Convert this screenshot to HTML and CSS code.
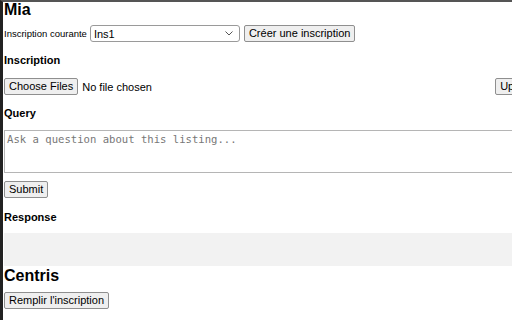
FILE: index.html
```html
<!doctype html>
<html>
  <head>
    <meta charset="utf-8">
    <title>Mia</title>
    <link rel="stylesheet" href="styles.css">
  </head>
  <body>
    <div class="popup">
      <h1>Mia</h1>

      <div class="current">
        <label for="current" class="small">Inscription courante</label>
        <span class="select-wrap">
          <select id="current" class="select">
            <option>Ins1</option>
          </select>
          <svg class="chevron" viewBox="0 0 8 5" width="8" height="5">
            <path d="M0.5 0.5 L4 4 L7.5 0.5"></path>
          </svg>
        </span>
        <button type="button" class="btn">Créer une inscription</button>
      </div>

      <h2>Inscription</h2>

      <div class="upload">
        <div class="file">
          <button type="button" class="btn">Choose Files</button>
          <span class="file-name">No file chosen</span>
        </div>
        <button type="button" class="btn">Upload</button>
      </div>

      <h2>Query</h2>
      <textarea class="query" placeholder="Ask a question about this listing..."></textarea>

      <div class="actions">
        <button type="button" class="btn">Submit</button>
      </div>

      <h2>Response</h2>
      <div class="response"></div>

      <h1 class="section">Centris</h1>
      <div class="actions">
        <button type="button" class="btn">Remplir l'inscription</button>
      </div>
    </div>
  </body>
</html>
```

FILE: styles.css
```css
html {
  box-sizing: border-box;
}

*, *:before, *:after {
  box-sizing: inherit;
}

body {
  margin: 0;
  font-family: "Liberation Sans", Arial, sans-serif;
  color: #000;
  background: #fff;
  border-top: 2px solid #555;
  border-left: 3px solid #222;
  min-height: 320px;
  overflow: hidden;
}

.popup {
  width: 560px;
  padding-left: 1px;
}

h1 {
  font-size: 16px;
  line-height: 16px;
  margin: 0;
  font-weight: bold;
}

h2 {
  font-size: 11px;
  line-height: 14px;
  margin: 0;
  font-weight: bold;
}

.btn {
  font-family: "Liberation Sans", Arial, sans-serif;
  font-size: 11px;
  height: 17px;
  padding: 0 4px;
  background: #efefef;
  border: 1px solid #8f8f8f;
  border-radius: 2px;
  color: #000;
  line-height: 15px;
}

.small {
  font-size: 9.5px;
}

.current {
  display: flex;
  align-items: center;
  gap: 3px;
  margin-top: 7px;
}

.select-wrap {
  position: relative;
  display: flex;
  margin-right: 1px;
}

.select {
  font-family: "Liberation Sans", Arial, sans-serif;
  font-size: 11px;
  width: 150px;
  height: 17px;
  padding: 0 3px;
  border: 1px solid #9a9a9a;
  border-radius: 3px;
  background: #fff;
  color: #000;
  -webkit-appearance: none;
  appearance: none;
}

.chevron {
  position: absolute;
  right: 7px;
  top: 6px;
  pointer-events: none;
}

.chevron path {
  fill: none;
  stroke: #555;
  stroke-width: 1;
}

.current + h2 {
  margin-top: 11px;
}

.upload {
  display: flex;
  justify-content: space-between;
  align-items: center;
  width: 536px;
  margin-top: 11px;
}

.file {
  display: flex;
  align-items: center;
  gap: 4px;
  font-size: 11px;
}

.upload + h2 {
  margin-top: 11px;
}

.query {
  display: block;
  width: 560px;
  height: 43px;
  margin-top: 10px;
  padding: 2px 2px;
  border: 1px solid #b5b5b5;
  font-family: "DejaVu Sans Mono", monospace;
  font-size: 10.6px;
  resize: none;
}

.query::placeholder {
  color: #777;
}

.actions {
  display: flex;
  margin-top: 8px;
}

.actions + h2 {
  margin-top: 12px;
}

.response {
  background: #f2f2f2;
  height: 33px;
  margin-top: 9px;
}

.section {
  margin-top: 2px;
}

.section + .actions {
  margin-top: 8px;
}
```
